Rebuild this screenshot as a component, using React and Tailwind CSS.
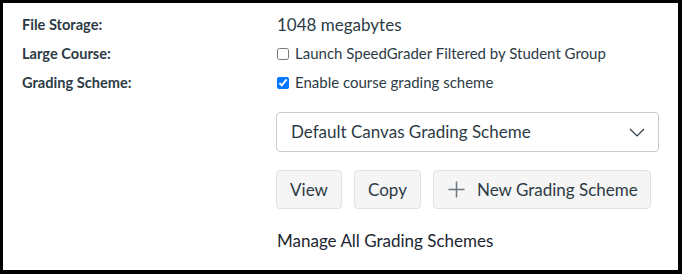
export default function App() {
  const font = { fontFamily: "Lato, 'Noto Sans', sans-serif" };
  return (
    <div
      className="box-border w-[682px] h-[274px] bg-white border-black border-t-[3px] border-l-[3px] border-r-[4px] border-b-[4px] text-[#2d3b45]"
      style={font}
    >
      <div className="grid grid-cols-[255px_1fr] pl-[19px] pt-[7px]">
        <div className="h-[29px] flex items-center text-[14.6px] font-bold">File Storage:</div>
        <div className="h-[29px] flex items-center text-[17px]">1048 megabytes</div>

        <div className="h-[29px] flex items-center text-[14.6px] font-bold">Large Course:</div>
        <div className="h-[29px] flex items-center text-[15px]">
          <input type="checkbox" className="m-0 mr-[6px] w-[12px] h-[12px]" />
          <span>Launch SpeedGrader Filtered by Student Group</span>
        </div>

        <div className="h-[29px] flex items-center text-[14.6px] font-bold">Grading Scheme:</div>
        <div className="h-[29px] flex items-center text-[15px]">
          <input type="checkbox" defaultChecked className="m-0 mr-[6px] w-[12px] h-[12px]" />
          <span>Enable course grading scheme</span>
        </div>

        <div></div>
        <div className="flex flex-col -ml-px">
          <div className="mt-[15px] w-[383px] h-[40px] box-border border border-[#c7cdd1] rounded-[4px] flex items-center justify-between pl-[14px] pr-[13px] text-[17px]">
            <span>Default Canvas Grading Scheme</span>
            <svg width="16" height="9" viewBox="0 0 16 9" fill="none">
              <path d="M1 1 L8 8 L15 1" stroke="#2d3b45" strokeWidth="1.2" />
            </svg>
          </div>
          <div className="mt-[18px] flex gap-[12px] text-[17px]">
            <button className="h-[39px] w-[66px] box-border bg-[#f5f5f5] border border-[#dfe3e5] rounded-[4px] text-[#2d3b45] flex items-center justify-center">View</button>
            <button className="h-[39px] w-[67px] box-border bg-[#f5f5f5] border border-[#dfe3e5] rounded-[4px] text-[#2d3b45] flex items-center justify-center">Copy</button>
            <button className="h-[39px] w-[218px] pl-[14px] box-border bg-[#f5f5f5] border border-[#dfe3e5] rounded-[4px] text-[#2d3b45] flex items-center gap-[12px]">
              <svg width="17" height="17" viewBox="0 0 17 17" fill="none">
                <path d="M8.5 0.5 V16.5 M0.5 8.5 H16.5" stroke="#6b7780" strokeWidth="1.5" />
              </svg>
              <span>New Grading Scheme</span>
            </button>
          </div>
          <div className="mt-[20px] h-[24px] flex items-center text-[17px] text-[#1c2630] pl-px">Manage All Grading Schemes</div>
        </div>
      </div>
    </div>
  );
}
